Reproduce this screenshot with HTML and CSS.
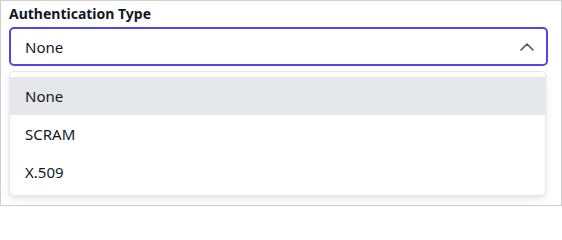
FILE: index.html
```html
<!DOCTYPE html>
<html>
<head>
<meta charset="utf-8">
<link rel="stylesheet" href="styles.css">
</head>
<body>
<div class="frame">
  <label class="label">Authentication Type</label>
  <div class="select">
    <span class="value">None</span>
    <svg class="chev" width="14" height="8" viewBox="0 0 14 8"><path d="M1 7 L7 1 L13 7" fill="none" stroke="#4b5563" stroke-width="1.6" stroke-linecap="round" stroke-linejoin="round"/></svg>
  </div>
  <ul class="menu">
    <li class="item active">None</li>
    <li class="item">SCRAM</li>
    <li class="item">X.509</li>
  </ul>
</div>
</body>
</html>
```
FILE: styles.css
```css
html, body {
  margin: 0;
  padding: 0;
  background: #ffffff;
  overflow: hidden;
}
body {
  width: 562px;
  height: 207px;
  font-family: "Noto Sans", "Open Sans", sans-serif;
  color: #111827;
}
.frame {
  box-sizing: border-box;
  width: 562px;
  height: 206px;
  border: 1px solid #cfcfcf;
  padding: 3px 13px 0 8px;
  display: flex;
  flex-direction: column;
}
.label {
  display: block;
  font-size: 14px;
  font-weight: 700;
  line-height: 20px;
  height: 20px;
}
.select {
  box-sizing: border-box;
  margin-top: 3px;
  height: 39px;
  flex: none;
  border: 2px solid #4f46e5;
  border-radius: 5px;
  display: flex;
  align-items: center;
  justify-content: space-between;
  padding: 0 12px 0 14px;
}
.value {
  font-size: 15px;
  line-height: 20px;
}
.chev {
  display: block;
}
.menu {
  list-style: none;
  margin: 5px 2px 0 0;
  padding: 5px 0 4px;
  border: 1px solid #e8e8e8;
  border-radius: 5px;
  box-shadow: 0 4px 10px rgba(0,0,0,0.08), 0 1px 3px rgba(0,0,0,0.05);
  background: #fff;
  flex: none;
}
.item {
  height: 38px;
  line-height: 38px;
  padding: 0 15px;
  font-size: 15px;
}
.item.active {
  background: #e5e7eb;
}
```
